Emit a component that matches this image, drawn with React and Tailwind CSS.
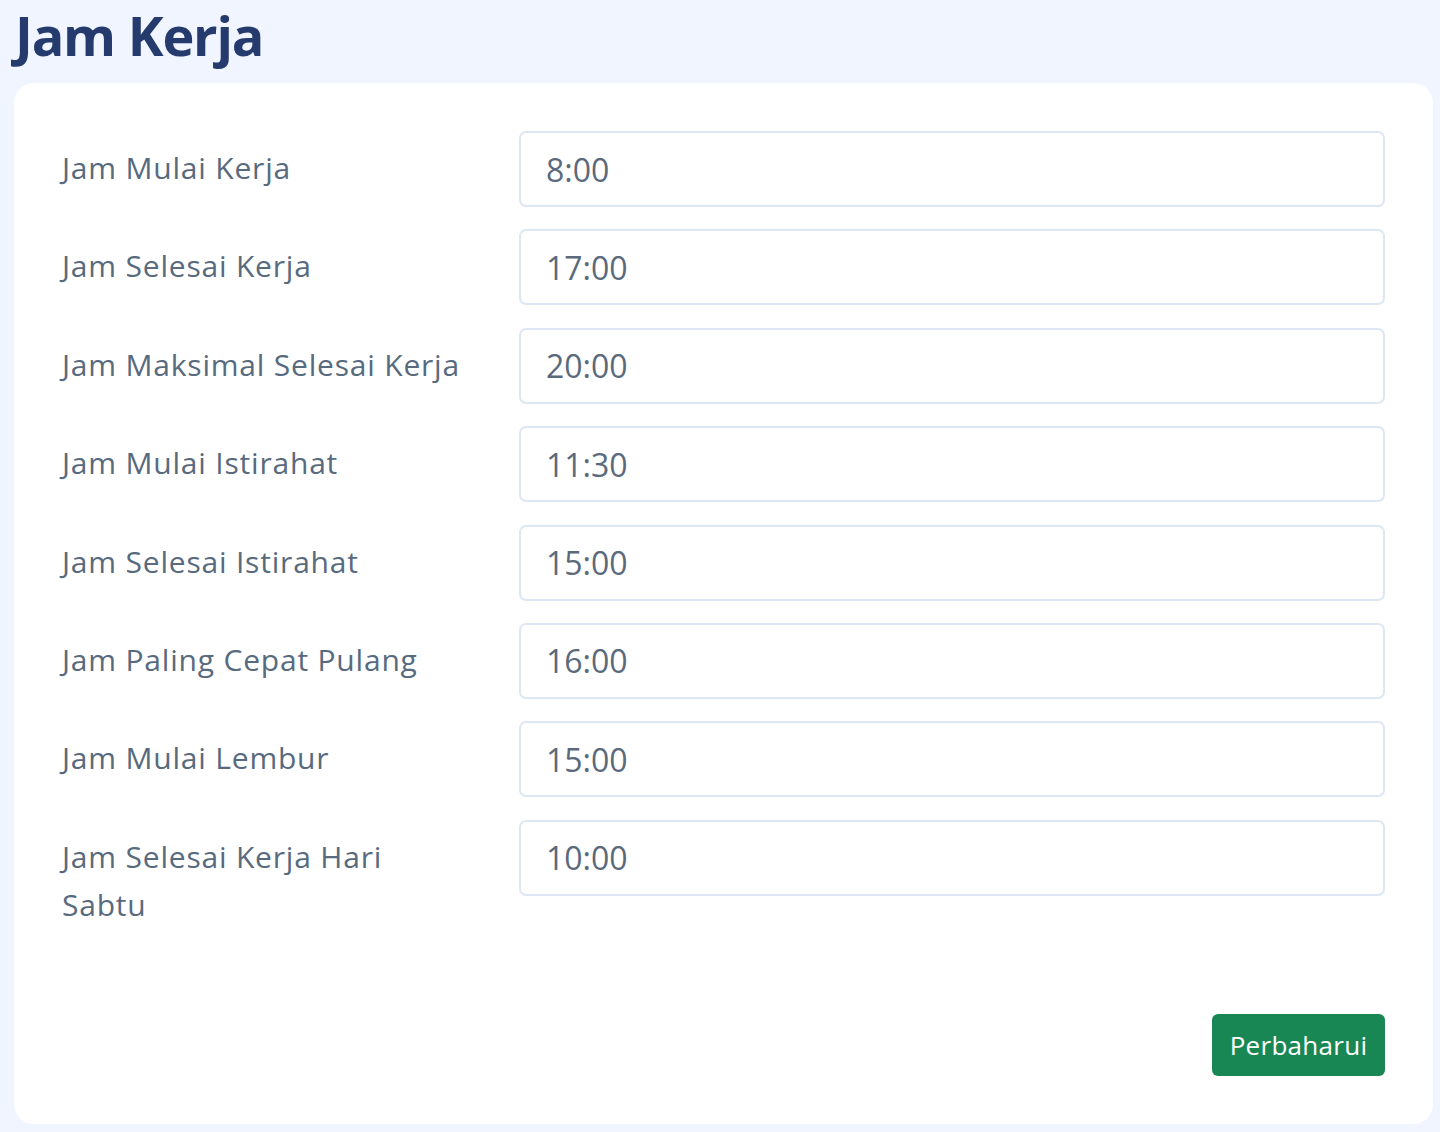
import React from 'react';

const rows = [
  { label: 'Jam Mulai Kerja', value: '8:00' },
  { label: 'Jam Selesai Kerja', value: '17:00' },
  { label: 'Jam Maksimal Selesai Kerja', value: '20:00' },
  { label: 'Jam Mulai Istirahat', value: '11:30' },
  { label: 'Jam Selesai Istirahat', value: '15:00' },
  { label: 'Jam Paling Cepat Pulang', value: '16:00' },
  { label: 'Jam Mulai Lembur', value: '15:00' },
  { label: 'Jam Selesai Kerja Hari Sabtu', value: '10:00' },
];

export default function App() {
  return (
    <div className="min-h-[1132px] bg-[#f0f5ff] px-[14px] pb-2 font-['Open_Sans',sans-serif]">
      <h1 className="ml-[1px] text-[54px] font-bold leading-[66px] tracking-[-1.2px] text-[#263b6d] pt-[2px] pb-[15px]">Jam Kerja</h1>

      {/* Form card */}
      <div className="bg-white rounded-[20px] p-12 w-[1419px] h-[1041px] flex flex-col">
        <div className="flex flex-col gap-[22.4px]">
          {rows.map((row) => (
            <div key={row.label} className="flex items-start">
              <label className="w-[457px] shrink-0 pt-[13px] pr-[47px] text-[30px] leading-[48px] tracking-[0.8px] text-[#586a7e]">
                {row.label}
              </label>
              <input
                type="text"
                defaultValue={row.value}
                className="flex-1 h-[76px] rounded-[7px] border-2 border-[#dde7f3] bg-white px-[25px] text-[32px] text-[#5a6a7c] outline-none"
              />
            </div>
          ))}
        </div>

        <div className="mt-auto flex justify-end">
          <button className="h-[62px] w-[173px] rounded-[6px] bg-[#198754] text-[26px] tracking-[0.3px] text-white">
            Perbaharui
          </button>
        </div>
      </div>
    </div>
  );
}
